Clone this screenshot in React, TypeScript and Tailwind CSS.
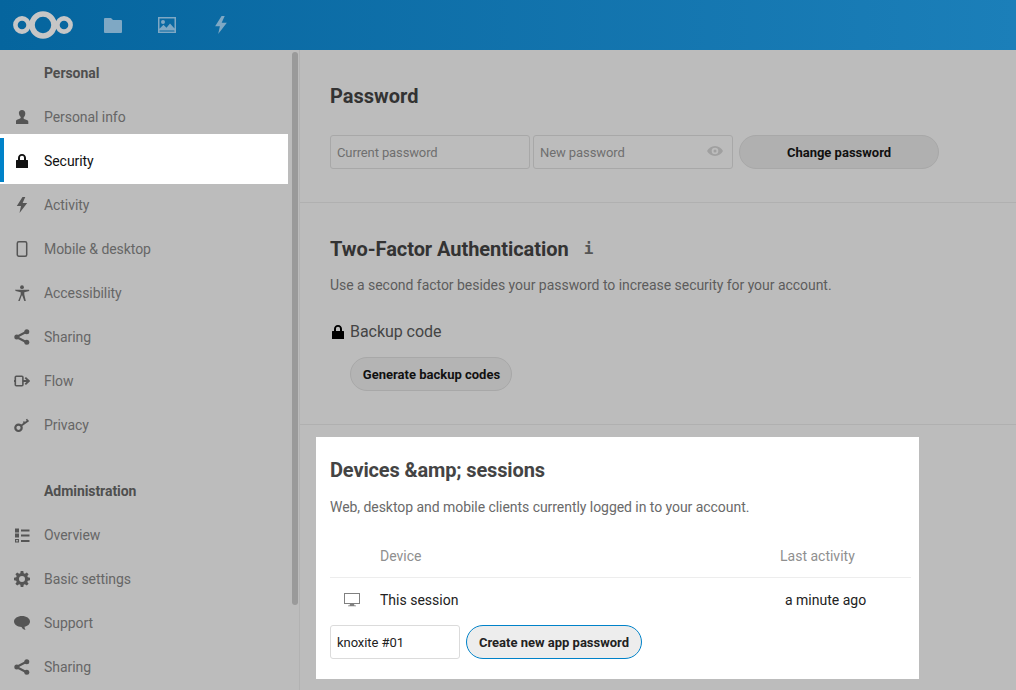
const iconClass = 'h-4 w-4 fill-current'

function Logo() {
  return (
    <svg width="62" height="30" viewBox="0 0 62 30" className="fill-none stroke-[#c6c6c6]">
      <circle cx="10" cy="15" r="6.6" strokeWidth="4.6" />
      <circle cx="31" cy="15" r="11" strokeWidth="5.6" />
      <circle cx="52" cy="15" r="6.6" strokeWidth="4.6" />
    </svg>
  )
}

function FolderIcon() {
  return (
    <svg viewBox="0 0 18 16" className="h-4 w-[18px] fill-current">
      <path d="M1 1h6l2 2h8a1 1 0 0 1 1 1v11a1 1 0 0 1-1 1H1a1 1 0 0 1-1-1V2a1 1 0 0 1 1-1z" />
    </svg>
  )
}

function ImageIcon() {
  return (
    <svg viewBox="0 0 18 16" className="h-4 w-[18px] fill-current">
      <path
        fillRule="evenodd"
        d="M0 0h18v16H0zM1.5 1.5v10.2l4-4 3 3 3.5-4.2 4.5 5V1.5zM1.5 13.6v.9h15v-.6l-.3-.3zM5 3a2 2 0 1 1 0 4 2 2 0 0 1 0-4z"
      />
    </svg>
  )
}

function FlashIcon({ className = iconClass }: { className?: string }) {
  return (
    <svg viewBox="0 0 16 16" className={className}>
      <path d="M8.500 0 2.800 9h4.200l-1.500 7L13.200 6H8.600L11.300 0z" />
    </svg>
  )
}

function UserIcon() {
  return (
    <svg viewBox="0 0 16 16" className={iconClass}>
      <path d="M8 1c2 0 3.300 1.500 3.300 3.500 0 1.500-.7 3-1.500 3.800-.4.500-.3 1.300.3 1.600l3.200 1.300c.7.3 1 .8 1 1.500V15H2v-2.800c0-.7.3-1.200 1-1.500l3.200-1.300c.6-.3.7-1.100.3-1.600-.8-.8-1.600-2.300-1.600-3.800C4.700 2.500 6 1 8 1z" />
    </svg>
  )
}

function LockIcon() {
  return (
    <svg viewBox="0 0 16 16" className={iconClass}>
      <path
        fillRule="evenodd"
        d="M8 1c2.500 0 4 1.800 4 4v2h1.500a.5.5 0 0 1 .5.500V15H2V7.500a.5.5 0 0 1 .5-.5H4V5c0-2.200 1.500-4 4-4zm0 1.800C6.700 2.800 6 3.700 6 5v2h4V5c0-1.300-.7-2.200-2-2.200z"
      />
    </svg>
  )
}

function PhoneIcon() {
  return (
    <svg viewBox="0 0 16 16" className="h-4 w-4 fill-none stroke-current" strokeWidth="1.500">
      <rect x="3.300" y="0.800" width="9.400" height="14.400" rx="1.500" />
    </svg>
  )
}

function AccessibilityIcon() {
  return (
    <svg viewBox="0 0 16 16" className={iconClass}>
      <circle cx="8" cy="2.200" r="1.900" />
      <path d="M1 4.700h14l.3 1.200-5 1.300v2.300L11.800 16h-1.500L8.300 10.500h-.6L5.700 16H4.200l2.500-6.500V7.200l-5-1.300z" />
    </svg>
  )
}

function ShareIcon() {
  return (
    <svg viewBox="0 0 16 16" className={iconClass}>
      <circle cx="12.800" cy="2.800" r="2.500" />
      <circle cx="12.800" cy="13.200" r="2.500" />
      <circle cx="2.800" cy="8" r="2.500" />
      <path d="M2 7 12 1.800l1 1.900L3 9zM3 7l10 5.300-1 1.900L2 9z" />
    </svg>
  )
}

function FlowIcon() {
  return (
    <svg viewBox="0 0 16 16" className="h-4 w-4 fill-none stroke-current" strokeWidth="1.600">
      <rect x="1.300" y="3.200" width="7.600" height="9.600" rx="1" />
      <path d="M0 8h1.300M9 8h5.500M11.300 4.600 14.800 8l-3.500 3.400" strokeWidth="1.900" />
    </svg>
  )
}

function KeyIcon() {
  return (
    <svg viewBox="0 0 16 16" className="h-4 w-4 fill-none stroke-current">
      <circle cx="4.500" cy="10.800" r="3.200" strokeWidth="2.200" />
      <path d="m7 8.800 7.500-5.300" strokeWidth="1.800" />
      <path d="m10.800 6.400-1.300-1.900M13.800 4.200l-1.300-2" strokeWidth="1.500" />
    </svg>
  )
}

function ListIcon() {
  return (
    <svg viewBox="0 0 16 16" className={iconClass}>
      <path d="M1 1.500h4v4H1zM7 2.500h8.500v2H7zM1 6.500h4v4H1zM7 7.500h8.500v2H7zM7 13h8.500v2H7z" />
      <path fillRule="evenodd" d="M1 12h4v3.500H1zm1.200 1.100v1.300h1.600v-1.300z" />
    </svg>
  )
}

function GearIcon() {
  return (
    <svg viewBox="0 0 16 16" className={iconClass}>
      <path
        fillRule="evenodd"
        d="M6.700 0h2.600l.4 2.200 1.200.5 1.900-1.300 1.800 1.800-1.300 1.900.5 1.200 2.200.4v2.600l-2.200.4-.5 1.200 1.300 1.900-1.800 1.800-1.900-1.300-1.200.5-.4 2.200H6.700l-.4-2.200-1.200-.5-1.900 1.300-1.800-1.800 1.300-1.900-.5-1.200L0 9.300V6.700l2.200-.4.500-1.200-1.300-1.900 1.800-1.800 1.900 1.300 1.200-.5zM8 5a3 3 0 1 0 0 6 3 3 0 0 0 0-6z"
      />
    </svg>
  )
}

function ChatIcon() {
  return (
    <svg viewBox="0 0 16 16" className={iconClass}>
      <path d="M8 1c4.400 0 8 2.400 8 5.500 0 2.600-2.500 4.700-5.500 5.300.1 1.400.5 2.400 1 3.200-2-.5-3.300-1.700-4-3.100C3.300 11.800 0 9.500 0 6.500 0 3.400 3.600 1 8 1z" />
    </svg>
  )
}

function EyeIcon() {
  return (
    <svg viewBox="0 0 16 16" className="h-4 w-4 fill-current">
      <path
        fillRule="evenodd"
        d="M8 3c3.500 0 6.500 2.200 8 5-1.500 2.800-4.500 5-8 5s-6.500-2.200-8-5c1.500-2.800 4.500-5 8-5zm0 1.700a3.300 3.300 0 1 0 0 6.600 3.300 3.300 0 0 0 0-6.600zM8 6.500a1.500 1.500 0 1 1 0 3 1.500 1.500 0 0 1 0-3z"
      />
    </svg>
  )
}

function MonitorIcon() {
  return (
    <svg viewBox="0 0 16 16" className="h-4 w-4 fill-current text-[#808080]">
      <path fillRule="evenodd" d="M0 1h16v11H0zm1 1v9h14V2zM6 12h4l.5 1.500H12v.7H4v-.7h1.500z" />
    </svg>
  )
}

const personalItems = [
  { label: 'Personal info', icon: <UserIcon /> },
  { label: 'Security', icon: <LockIcon />, active: true },
  { label: 'Activity', icon: <FlashIcon /> },
  { label: 'Mobile & desktop', icon: <PhoneIcon /> },
  { label: 'Accessibility', icon: <AccessibilityIcon /> },
  { label: 'Sharing', icon: <ShareIcon /> },
  { label: 'Flow', icon: <FlowIcon /> },
  { label: 'Privacy', icon: <KeyIcon /> },
]

const adminItems = [
  { label: 'Overview', icon: <ListIcon /> },
  { label: 'Basic settings', icon: <GearIcon /> },
  { label: 'Support', icon: <ChatIcon /> },
  { label: 'Sharing', icon: <ShareIcon /> },
]

function NavItem({ label, icon, active }: { label: string; icon: React.ReactNode; active?: boolean }) {
  if (active) {
    return (
      <a className="relative -mt-[5px] -mb-px flex h-[50px] w-[288px] items-center bg-white pt-[4px] text-[#111]">
        <span className="absolute top-[4px] left-0 h-[44px] w-1 bg-[#0082c9]" />
        <span className="flex w-11 justify-center">{icon}</span>
        {label}
      </a>
    )
  }
  return (
    <a className="flex h-11 items-center text-[#666]">
      <span className="flex w-11 justify-center text-[#555]">{icon}</span>
      {label}
    </a>
  )
}

function NavCaption({ label }: { label: string }) {
  return <div className="flex h-11 items-center pl-11 font-bold text-[#4f4f4f]">{label}</div>
}

function Sidebar() {
  return (
    <aside className="relative w-[300px] shrink-0 border-r border-[#b2b2b2] pt-px tracking-[-0.06px]">
      <NavCaption label="Personal" />
      {personalItems.map((item) => (
        <NavItem key={item.label} {...item} />
      ))}
      <div className="h-[22px]" />
      <NavCaption label="Administration" />
      {adminItems.map((item) => (
        <NavItem key={item.label} {...item} />
      ))}
      <div className="absolute top-[2px] right-[1px] h-[553px] w-[6px] rounded-[3px] bg-[#9a9a9a]" />
    </aside>
  )
}

export default function App() {
  return (
    <div className="flex h-[690px] w-[1016px] flex-col overflow-hidden bg-[#bcbcbc] font-['Roboto',sans-serif] text-sm">
      <header className="flex h-[50px] shrink-0 items-center bg-gradient-to-r from-[#05659e] to-[#1b7fb9] pl-[12px]">
        <Logo />
        <nav className="flex items-center text-[#7fa8c4]">
          <span className="ml-[30px]"><FolderIcon /></span>
          <span className="ml-[36px]"><ImageIcon /></span>
          <span className="ml-[36px]"><FlashIcon className="h-[18px] w-[18px] fill-current" /></span>
        </nav>
      </header>

      <div className="flex min-h-0 flex-1">
        <Sidebar />

        <main className="min-w-0 flex-1">
          <section className="h-[153px] border-b border-[#b0b0b0] px-[30px] pt-[31px]">
            <h2 className="text-[20px] leading-[30px] font-bold text-[#333]">Password</h2>
            <div className="mt-[24px] flex items-center">
              <div className="flex h-[34px] w-[200px] items-center rounded-[3px] border border-[#a8a8a8] px-[6px] pt-[2px] text-[13px] tracking-[-0.12px] text-[#6f6f6f]">
                Current password
              </div>
              <div className="ml-[3px] flex h-[34px] w-[200px] items-center justify-between rounded-[3px] border border-[#a8a8a8] pt-[2px] pr-[9px] pl-[6px] text-[13px] tracking-[-0.08px] text-[#6f6f6f]">
                New password
                <span className="-mt-[4px] text-[#a0a0a0]"><EyeIcon /></span>
              </div>
              <button className="ml-[6px] h-[34px] w-[200px] rounded-full border border-[#a8a8a8] bg-[#b0b0b0] pt-[2px] text-[13px] font-bold text-[#111]">
                Change password
              </button>
            </div>
          </section>

          <section className="h-[222px] border-b border-[#b0b0b0] px-[30px] pt-[31px]">
            <h2 className="flex items-center text-[20px] leading-[30px] font-bold tracking-[-0.05px] text-[#333]">
              Two-Factor Authentication
              <span className="ml-[15px] font-['DejaVu_Sans_Mono',monospace] text-[16px] font-bold text-[#555]">i</span>
            </h2>
            <p className="mt-[11px] leading-[20px] tracking-[-0.04px] text-[#5c5c5c]">
              Use a second factor besides your password to increase security for your account.
            </p>
            <div className="mt-[27px] flex items-center text-[16px] leading-[20px] tracking-[-0.05px] text-[#444]">
              <span className="mr-[4px] text-black"><LockIcon /></span>
              Backup code
            </div>
            <button className="mt-[15px] ml-[20px] h-[34px] w-[162px] rounded-full border border-[#a8a8a8] bg-[#b4b4b4] pt-[2px] pl-px text-[13px] font-bold text-[#111]">
              Generate backup codes
            </button>
          </section>

          <section className="mt-[12px] ml-[16px] h-[242px] w-[603px] bg-white pt-[18px] pr-[8px] pl-[14px]">
            <h2 className="text-[20px] leading-[30px] font-bold tracking-[-0.14px] text-[#444]">Devices &amp;amp; sessions</h2>
            <p className="mt-[12px] leading-[20px] tracking-[-0.05px] text-[#6a6a6a]">
              Web, desktop and mobile clients currently logged in to your account.
            </p>
            <table className="mt-[17px] w-full table-fixed text-left">
              <thead>
                <tr className="h-[43px] border-b border-[#ededed] text-[#8f8f8f]">
                  <th className="w-[50px] font-normal" />
                  <th className="pt-[2px] font-normal">Device</th>
                  <th className="w-[131px] pt-[2px] font-normal">Last activity</th>
                </tr>
              </thead>
              <tbody>
                <tr className="h-[44px] text-[#222]">
                  <td className="pt-[2px] pl-[14px]"><MonitorIcon /></td>
                  <td className="pt-[2px]">This session</td>
                  <td className="pt-[2px] pl-[5px]">a minute ago</td>
                </tr>
              </tbody>
            </table>
            <div className="mt-[4px] flex items-center">
              <div className="flex h-[34px] w-[130px] items-center rounded-[3px] border border-[#dbdbdb] px-[6px] pt-[2px] text-[13px] tracking-[-0.06px] text-[#222]">
                knoxite #01
              </div>
              <button className="ml-[6px] h-[34px] w-[176px] rounded-full border border-[#0082c9] bg-[#ededed] pt-[2px] text-[13px] font-bold text-[#222]">
                Create new app password
              </button>
            </div>
          </section>
        </main>
      </div>
    </div>
  )
}
